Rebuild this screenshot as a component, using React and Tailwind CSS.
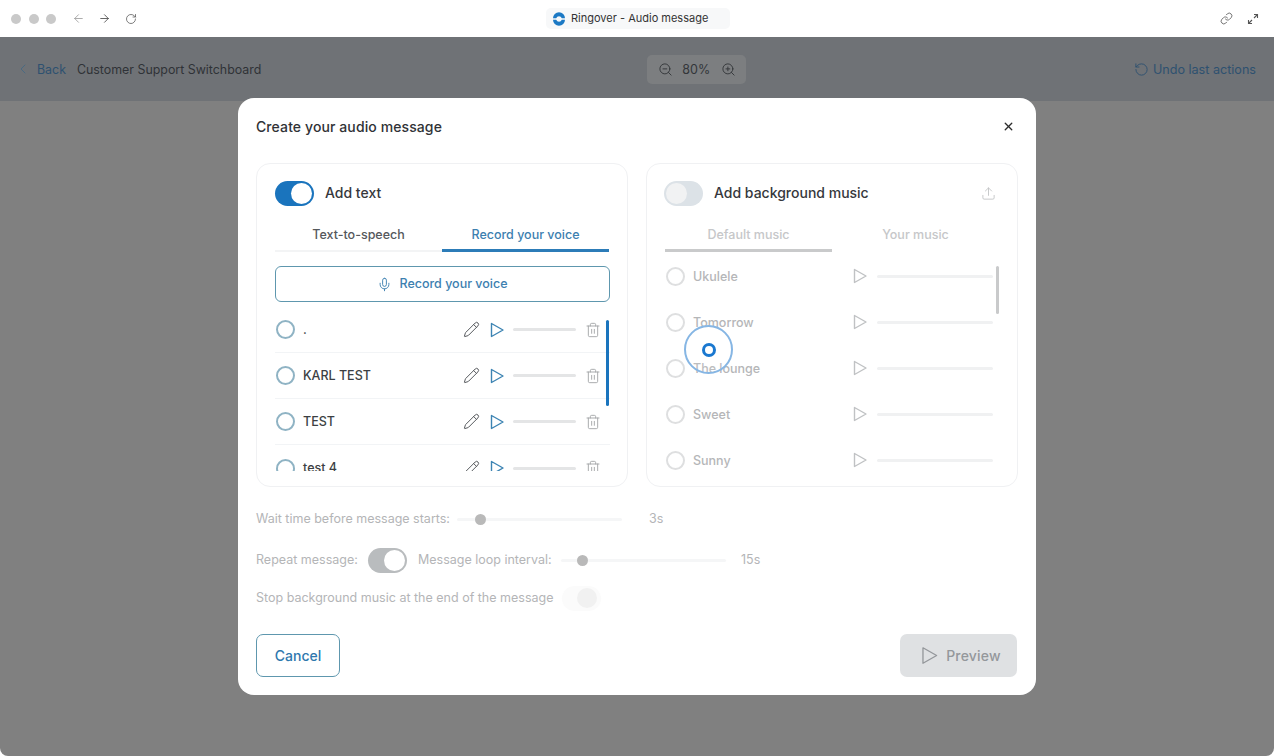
import { ArrowLeft, ArrowRight, RotateCw, Link, ChevronLeft, ZoomIn, ZoomOut, RotateCcw, X, Mic, Pencil, Trash2, Upload } from 'lucide-react'

const voices = ['.', 'KARL TEST', 'TEST', 'test 4']
const tracks = ['Ukulele', 'Tomorrow', 'The lounge', 'Sweet', 'Sunny']

function PlayIcon({ size, className, width = 1.4 }) {
  return (
    <svg width={size} height={size} viewBox="0 0 16 16" fill="none" className={className}>
      <path d="M2.5 1.5 L14 8 L2.5 14.5 Z" stroke="currentColor" strokeWidth={width} strokeLinejoin="round" />
    </svg>
  )
}

function Toggle({ on, color }) {
  return (
    <div className={`flex h-[25px] w-[39px] shrink-0 items-center rounded-full p-[2px] ${on ? 'justify-end' : 'justify-start'} ${color}`}>
      <div className={`h-[21px] w-[21px] rounded-full ${on ? 'bg-white' : 'bg-[#f1f2f3]'}`} />
    </div>
  )
}

function Slider({ left, width }) {
  return (
    <div className={`relative h-[3px] rounded-full bg-[#f5f6f7] ${width}`}>
      <div className={`absolute top-[-4px] h-[11px] w-[11px] rounded-full bg-[#b9b9b9] ${left}`} />
    </div>
  )
}

function VoiceRow({ name, last }) {
  return (
    <div className={`flex h-[46px] shrink-0 items-center ${last ? '' : 'border-b border-[#f2f4f6]'}`}>
      <div className="ml-[1px] h-[19px] w-[19px] shrink-0 rounded-full border-2 border-[#8fb3c4]" />
      <div className="ml-[8px] flex-1 pt-[1px] text-[12.5px] font-medium text-[#3c3f43]">{name}</div>
      <Pencil size={17} strokeWidth={1.4} className="text-[#55585c]" />
      <PlayIcon size={16} className="ml-[9px] text-[#3d84b3]" />
      <div className="ml-[8px] h-[3px] w-[63px] rounded-full bg-[#e4e5e6]" />
      <Trash2 size={16} strokeWidth={1.4} className="ml-[9px] text-[#a4a6a8]" />
      <div className="w-[9px]" />
    </div>
  )
}

function TrackRow({ name }) {
  return (
    <div className="flex h-[46px] shrink-0 items-center">
      <div className="ml-[1px] h-[19px] w-[19px] shrink-0 rounded-full border-2 border-[#dedfe0]" />
      <div className="ml-[8px] w-[159px] pt-[2px] text-[12.5px] font-medium text-[#b5b6b8]">{name}</div>
      <PlayIcon size={16} className="text-[#c0c2c4]" />
      <div className="ml-[9px] h-[3px] w-[116px] rounded-full bg-[#f0f1f2]" />
    </div>
  )
}

export default function App() {
  return (
    <div className="relative h-[756px] w-[1274px] overflow-hidden bg-white font-['Inter',sans-serif]">
      <div className="flex h-full flex-col overflow-hidden rounded-b-[8px] bg-[#808080]">
        {/* Browser bar */}
        <div className="flex h-[37px] shrink-0 items-center bg-white pl-[11px] pr-[15px]">
          <div className="flex gap-[7.5px]">
            <div className="h-[10px] w-[10px] rounded-full bg-[#c9c9c9]" />
            <div className="h-[10px] w-[10px] rounded-full bg-[#c9c9c9]" />
            <div className="h-[10px] w-[10px] rounded-full bg-[#c9c9c9]" />
          </div>
          <ArrowLeft size={13} strokeWidth={1.5} className="ml-[16px] text-[#9a9a9a]" />
          <ArrowRight size={13} strokeWidth={1.5} className="ml-[13px] text-[#444]" />
          <RotateCw size={12} strokeWidth={1.5} className="ml-[14px] text-[#555]" />
          <div className="ml-[409px] flex h-[21px] w-[184px] items-center rounded-[5px] bg-[#f7f8f9] pl-[6px]">
            <svg width="14" height="14" viewBox="0 0 14 14" fill="none">
              <path d="M1 6.2A6 6 0 0 1 13 6.2H9.8A3 3 0 0 0 4.2 6.2Z" fill="#1c79c4" />
              <path d="M1 7.8A6 6 0 0 0 13 7.8H9.8A3 3 0 0 1 4.2 7.8Z" fill="#1c79c4" />
            </svg>
            <span className="ml-[5px] text-[11px] text-[#333]">Ringover - Audio message</span>
          </div>
          <div className="flex-1" />
          <Link size={13} strokeWidth={1.5} className="text-[#555]" />
          <svg width="12" height="12" viewBox="0 0 12 12" fill="none" stroke="#555" strokeWidth="1.1" className="ml-[14px]">
            <path d="M1.5 10.5 L5 7 M1.5 7 V10.5 H5" />
            <path d="M10.5 1.5 L7 5 M7 1.5 H10.5 V5" />
          </svg>
        </div>

        {/* Dimmed page header */}
        <div className="flex h-[64px] shrink-0 items-center bg-[#6f7276] pl-[15px] pr-[18px]">
          <ChevronLeft size={16} strokeWidth={1.5} className="text-[#4a6a82]" />
          <span className="ml-[6px] pt-[2px] text-[12.4px] text-[#2e5170]">Back</span>
          <span className="ml-[11px] pt-[2px] text-[12.4px] text-[#2f3237]">Customer Support Switchboard</span>
          <div className="ml-[386px] flex h-[29px] w-[99px] items-center rounded-[5px] bg-[#7c7e80] pl-[11px]">
            <ZoomOut size={15} strokeWidth={1.5} className="text-[#33363a]" />
            <span className="ml-[9px] pt-[2px] text-[12.5px] text-[#33363a]">80%</span>
            <ZoomIn size={15} strokeWidth={1.5} className="ml-[11px] text-[#33363a]" />
          </div>
          <div className="flex-1" />
          <RotateCcw size={15} strokeWidth={1.5} className="text-[#2e5170]" />
          <span className="ml-[4px] pt-[2px] text-[12.6px] text-[#2e5170]">Undo last actions</span>
        </div>
      </div>

      {/* Dialog */}
      <div className="absolute left-[238px] top-[98px] flex h-[597px] w-[798px] flex-col rounded-[16px] bg-white pl-[18px] pr-[18px]">
        <div className="flex h-[56px] shrink-0 items-center justify-between">
          <h2 className="text-[14px] font-medium tracking-[0.1px] text-[#303236]">Create your audio message</h2>
          <X size={13} strokeWidth={2.5} className="mr-[3px] text-[#2b2b2b]" />
        </div>

        <div className="mt-[9px] flex gap-[18px]">
          {/* Add text card */}
          <div className="h-[324px] w-[372px] shrink-0 overflow-hidden rounded-[14px] border border-[#f0f1f3] px-[18px]">
            <div className="mt-[17px] flex items-center gap-[11px]">
              <Toggle on color="bg-[#1a74bd]" />
              <span className="pb-[2px] text-[14px] font-medium text-[#36383c]">Add text</span>
            </div>
            <div className="mt-[14px] flex text-[12.5px] font-medium">
              <div className="h-[32px] w-[167px] border-b-[2px] border-[#f3f4f5] pt-[6px] text-center text-[#55585c]">Text-to-speech</div>
              <div className="h-[32px] w-[167px] border-b-[3px] border-[#2c7cb8] pt-[6px] text-center text-[#3d80b0]">Record your voice</div>
            </div>
            <div className="mt-[14px] flex h-[36px] w-[335px] items-center justify-center gap-[7px] rounded-[6px] border border-[#5e97ae] text-[12.5px] font-medium text-[#3d80b0]">
              <Mic size={15} strokeWidth={1.5} />
              Record your voice
            </div>
            <div className="relative mt-[5px] flex h-[164px] w-[335px] flex-col overflow-hidden">
              {voices.map((name, i) => (
                <VoiceRow key={name} name={name} last={i === voices.length - 1} />
              ))}
              <div className="absolute right-[1px] top-[13px] h-[86px] w-[3px] rounded-full bg-[#1a74bd]" />
            </div>
          </div>

          {/* Background music card */}
          <div className="relative h-[324px] w-[372px] shrink-0 overflow-hidden rounded-[14px] border border-[#f0f1f3] px-[18px]">
            <div className="mt-[17px] -ml-[1px] flex items-center gap-[11px]">
              <Toggle color="bg-[#dce2e7]" />
              <span className="flex-1 pb-[2px] text-[14px] font-medium text-[#36383c]">Add background music</span>
              <Upload size={15} strokeWidth={1.5} className="mr-[3px] text-[#c4c6c8]" />
            </div>
            <div className="mt-[14px] flex text-[12.5px] font-medium text-[#c6c7c9]">
              <div className="h-[32px] w-[167px] border-b-[3px] border-[#c9cacb] pt-[6px] text-center">Default music</div>
              <div className="h-[32px] w-[167px] pt-[6px] text-center">Your music</div>
            </div>
            <div className="mt-[1px] flex flex-col">
              {tracks.map((name) => (
                <TrackRow key={name} name={name} />
              ))}
            </div>
            <div className="absolute left-[349px] top-[102px] h-[48px] w-[3px] rounded-full bg-[#c9cacb]" />
          </div>
        </div>

        {/* Options */}
        <div className="mt-[22px] flex h-[20px] items-center text-[12.5px] text-[#b4b5b7]">
          <span className="w-[201px]">Wait time before message starts:</span>
          <Slider left="left-[18px]" width="w-[165px]" />
          <span className="ml-[27px]">3s</span>
        </div>
        <div className="mt-[15px] flex h-[32px] items-center text-[12.5px] text-[#b4b5b7]">
          <span className="w-[112px]">Repeat message:</span>
          <Toggle on color="bg-[#b9bcbe]" />
          <span className="ml-[11px] w-[143px]">Message loop interval:</span>
          <Slider left="left-[16px]" width="w-[165px]" />
          <span className="ml-[15px]">15s</span>
        </div>
        <div className="mt-[10px] flex h-[24px] items-center text-[12.5px] text-[#b4b5b7]">
          <span className="w-[306px]">Stop background music at the end of the message</span>
          <div className="flex h-[25px] w-[39px] items-center justify-end rounded-full bg-[#fbfbfb] pr-[4px]">
            <div className="h-[20px] w-[20px] rounded-full bg-[#f1f1f1]" />
          </div>
        </div>

        <div className="mt-[24px] flex items-center justify-between">
          <button className="h-[43px] w-[84px] rounded-[7px] border border-[#5e97ae] text-[14px] font-medium text-[#2f78ae]">Cancel</button>
          <button className="mr-[1px] flex h-[43px] w-[117px] items-center justify-center gap-[7px] rounded-[7px] bg-[#dfe1e3] pl-[4px] text-[14px] font-medium tracking-[0.2px] text-[#94979b]">
            <PlayIcon size={19} width={1.1} />
            Preview
          </button>
        </div>
      </div>

      {/* Click marker */}
      <div className="absolute left-[684px] top-[325px] flex h-[49px] w-[49px] items-center justify-center rounded-full border-2 border-[#86b6e4] bg-white/10">
        <div className="h-[14px] w-[14px] rounded-full border-[3px] border-[#1a78d0]" />
      </div>
    </div>
  )
}
